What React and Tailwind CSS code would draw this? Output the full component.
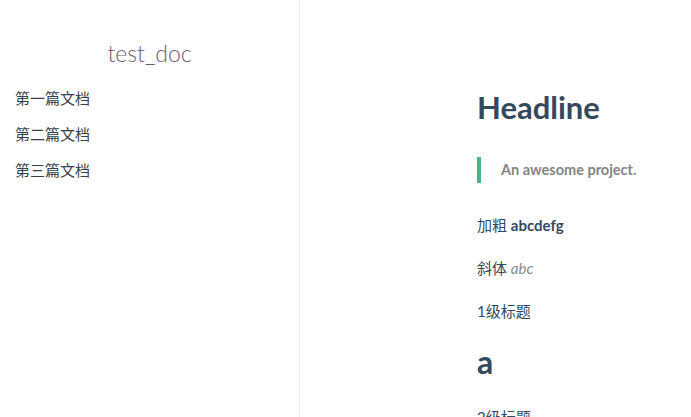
export default function App() {
  const font = { fontFamily: 'Lato, "Noto Sans CJK SC", sans-serif' };
  return (
    <div className="flex h-screen w-screen overflow-hidden bg-white text-[#34495e]" style={font}>
      {/* Sidebar */}
      <aside className="w-[300px] shrink-0 border-r border-[#eee] pt-[38px] text-[15px]">
        <h1 className="text-center text-[23px] font-light leading-[30px] text-[#6a5a78]">test_doc</h1>
        <ul className="mt-[19px] ml-[15px] flex flex-col gap-[13px] text-[#364149]">
          <li className="leading-[23px]">第一篇文档</li>
          <li className="leading-[23px]">第二篇文档</li>
          <li className="leading-[23px]">第三篇文档</li>
        </ul>
      </aside>

      {/* Content */}
      <main className="flex-1 pl-[177px] pt-[86px] text-[15px]">
        <h1 className="text-[31px] font-bold leading-[42px]">Headline</h1>
        <blockquote className="mt-[29px] border-l-4 border-[#42b983] py-[2px] pl-[20px] text-[#858585]">
          <p className="text-[14.5px] font-bold leading-[22px]">An awesome project.</p>
        </blockquote>
        <p className="mt-[29px] leading-[26px]">
          加粗 <strong className="font-bold">abcdefg</strong>
        </p>
        <p className="mt-[17px] leading-[26px]">
          斜体 <em className="italic text-[#7f8c8d]">abc</em>
        </p>
        <p className="mt-[17px] leading-[26px]">1级标题</p>
        <h1 className="mt-[18px] text-[32px] font-bold leading-[40px]">a</h1>
        <p className="mt-[22px] leading-[26px]">2级标题</p>
      </main>
    </div>
  );
}
